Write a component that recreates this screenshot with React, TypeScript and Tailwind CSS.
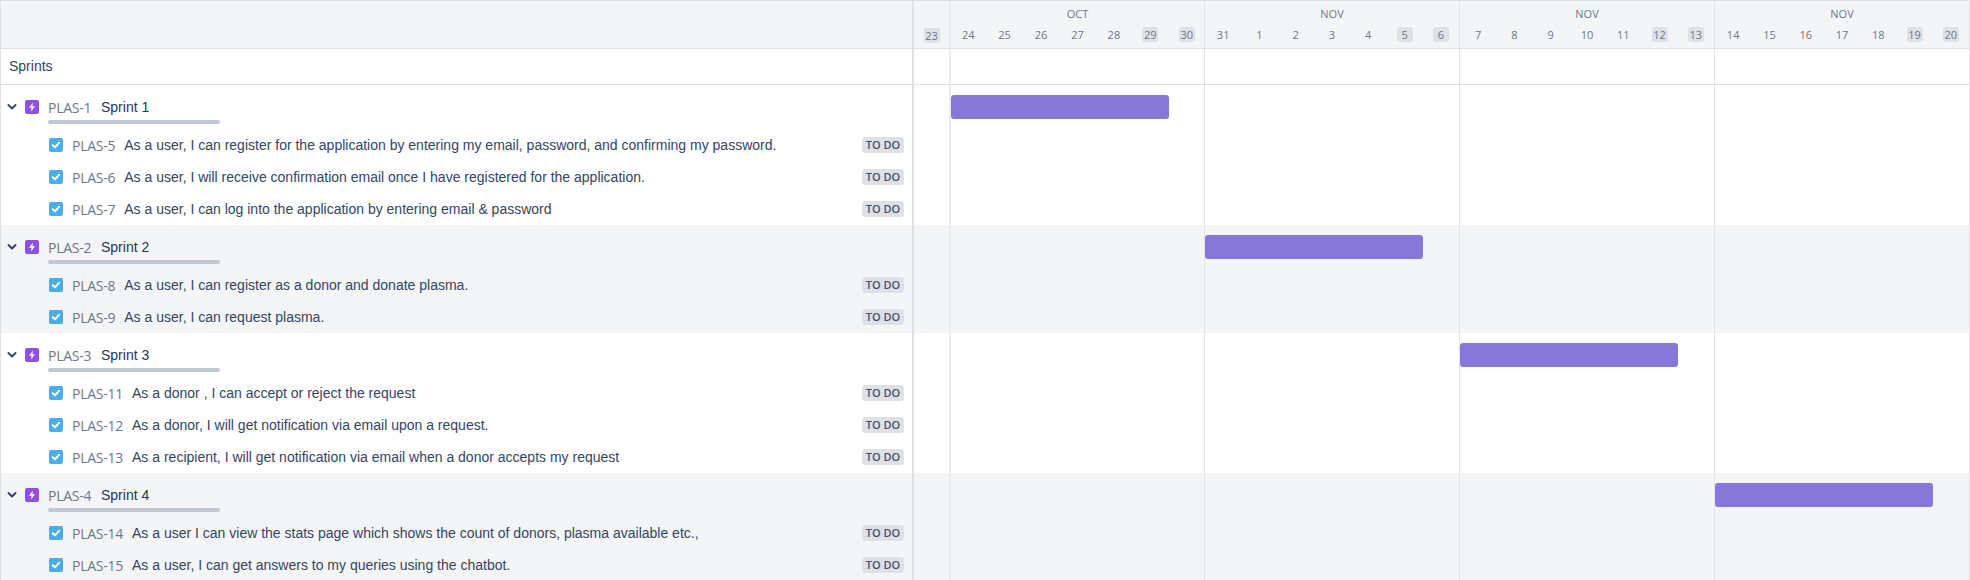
import React from "react";

const font = "font-['Liberation_Sans',sans-serif]";
const alt = "font-['Open_Sans',sans-serif]";

type Issue = { key: string; title: string };
type Group = { key: string; name: string; bar: number; shaded: boolean; issues: Issue[] };

const groups: Group[] = [
  { key: "PLAS-1", name: "Sprint 1", bar: 0, shaded: false, issues: [
    { key: "PLAS-5", title: "As a user, I can register for the application by entering my email, password, and confirming my password." },
    { key: "PLAS-6", title: "As a user, I will receive confirmation email once I have registered for the application." },
    { key: "PLAS-7", title: "As a user, I can log into the application by entering email & password" },
  ]},
  { key: "PLAS-2", name: "Sprint 2", bar: 1, shaded: true, issues: [
    { key: "PLAS-8", title: "As a user, I can register as a donor and donate plasma." },
    { key: "PLAS-9", title: "As a user, I can request plasma." },
  ]},
  { key: "PLAS-3", name: "Sprint 3", bar: 2, shaded: false, issues: [
    { key: "PLAS-11", title: "As a donor , I can accept or reject the request" },
    { key: "PLAS-12", title: "As a donor, I will get notification via email upon a request." },
    { key: "PLAS-13", title: "As a recipient, I will get notification via email when a donor accepts my request" },
  ]},
  { key: "PLAS-4", name: "Sprint 4", bar: 3, shaded: true, issues: [
    { key: "PLAS-14", title: "As a user I can view the stats page which shows the count of donors, plasma available etc.," },
    { key: "PLAS-15", title: "As a user, I can get answers to my queries using the chatbot." },
  ]},
];

const months = [
  { label: "OCT", days: [24, 25, 26, 27, 28, 29, 30] },
  { label: "NOV", days: [31, 1, 2, 3, 4, 5, 6] },
  { label: "NOV", days: [7, 8, 9, 10, 11, 12, 13] },
  { label: "NOV", days: [14, 15, 16, 17, 18, 19, 20] },
];

function Day({ n, weekend }: { n: number; weekend: boolean }) {
  return (
    <div className="flex-1 flex justify-center">
      <span className={`${alt} h-[15px] w-[16px] rounded-[3px] text-center text-[11px] leading-[15px] text-[#6b778c] ${weekend ? "bg-[#dfe1e6]" : ""}`}>{n}</span>
    </div>
  );
}

function SprintIcon() {
  return (
    <svg width="14" height="14" viewBox="0 0 14 14" className="shrink-0">
      <rect width="14" height="14" rx="2" fill="#904ee2" />
      <path d="M8 2.5 4 7.8h2.6L6 11.5l4-5.3H7.4z" fill="#fff" />
    </svg>
  );
}

function TaskIcon() {
  return (
    <svg width="14" height="14" viewBox="0 0 14 14" className="shrink-0">
      <rect width="14" height="14" rx="2" fill="#4bade8" />
      <path d="M3.8 7.2 6 9.3l4.2-4.6" fill="none" stroke="#fff" strokeWidth="2" strokeLinecap="round" strokeLinejoin="round" />
    </svg>
  );
}

function Cells({ bar }: { bar?: number }) {
  return (
    <div className="flex">
      <div className="w-[35px] shrink-0" />
      {months.map((_, i) => (
        <div key={i} className={`w-[255px] shrink-0 pt-[10px] ${i === 0 ? "border-l-[2px] border-[#ebecf0]" : "border-l border-[#e2e4e9]"}`}>
          {bar === i && <div className="h-[24px] w-[218px] rounded-[3px] bg-[#8777d9]" />}
        </div>
      ))}
      <div className="w-px shrink-0 bg-[#e2e4e9]" />
    </div>
  );
}

export default function App() {
  return (
    <div className={`${font} w-[1970px] h-[580px] overflow-hidden bg-white text-[14px] text-[#344563] border-l border-t border-[#dfe1e6]`}>
      <div className="flex h-[48px] bg-[#f4f5f7] border-b border-[#dfe1e6]">
        <div className="w-[913px] shrink-0 border-r-[2px] border-[#dfe1e6]" />
        <div className="w-[35px] shrink-0 flex items-end justify-center pb-[5px]">
          <Day n={23} weekend />
        </div>
        {months.map((m, i) => (
          <div key={i} className={`w-[255px] shrink-0 flex flex-col ${i === 0 ? "border-l-[2px] border-[#ebecf0]" : "border-l border-[#e2e4e9]"}`}>
            <div className={`${alt} h-[26px] pt-[5px] text-center text-[11px] leading-[15px] text-[#6b778c]`}>{m.label}</div>
            <div className={`flex ${i === 0 ? "mx-[-1px]" : ""}`}>
              {m.days.map((d, j) => <Day key={j} n={d} weekend={j >= 5} />)}
            </div>
          </div>
        ))}
        <div className="w-px shrink-0 bg-[#e2e4e9]" />
      </div>
      <div className="flex h-[36px] border-b border-[#dfe1e6]">
        <div className="w-[913px] shrink-0 border-r-[2px] border-[#dfe1e6] pl-[8px] leading-[35px]">Sprints</div>
        <Cells />
      </div>
      {groups.map((g) => (
        <div key={g.key} className={`flex ${g.shaded ? "bg-[#f4f5f7]" : "bg-white"}`}>
          <div className="w-[913px] shrink-0 border-r-[2px] border-[#dfe1e6]">
            <div className="h-[44px] flex pl-[5px] pt-[14px]">
              <svg width="12" height="14" viewBox="0 0 12 14" className="shrink-0 mt-[1px]">
                <path d="M2.5 5 6 8.5 9.5 5" fill="none" stroke="#344563" strokeWidth="2" strokeLinecap="round" strokeLinejoin="round" />
              </svg>
              <div className="ml-[7px] mt-[1px]"><SprintIcon /></div>
              <div className="ml-[9px] flex flex-col">
                <div className="flex h-[16px] items-center whitespace-nowrap">
                  <span className={`${alt} text-[#6b778c] w-[53px] text-[14px] tracking-[-0.25px] leading-[20px] mt-[2px]`}>{g.key}</span>
                  <span className="text-[#253858]">{g.name}</span>
                </div>
                <div className="mt-[5px] w-[172px] h-[4px] rounded-[2px] bg-[#c1c7d0]" />
              </div>
            </div>
            {g.issues.map((t) => (
              <div key={t.key} className="h-[32px] flex items-center pl-[48px] pr-[8px] whitespace-nowrap">
                <TaskIcon />
                <span className={`${alt} ml-[9px] text-[14px] tracking-[-0.25px] text-[#6b778c] mt-[1px]`}>{t.key}</span>
                <span className="ml-[9px] flex-1">{t.title}</span>
                <span className={`${alt} h-[16px] w-[42px] text-center rounded-[3px] bg-[#dfe1e6] text-[11px] leading-[16px] font-semibold text-[#42526e]`}>TO DO</span>
              </div>
            ))}
          </div>
          <Cells bar={g.bar} />
        </div>
      ))}
    </div>
  );
}
